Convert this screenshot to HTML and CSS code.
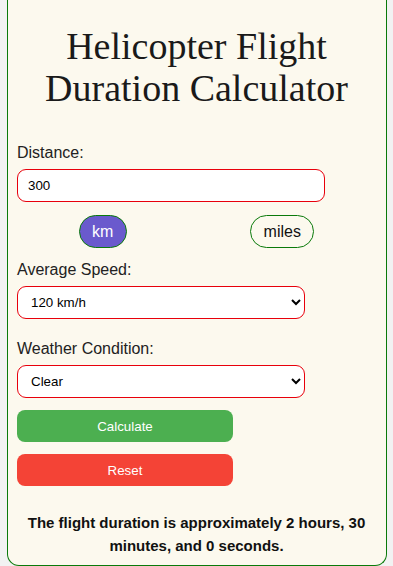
FILE: index.html
```html
<!DOCTYPE html>
<html>
<head>
<meta charset="utf-8">
<link rel="stylesheet" href="styles.css">
</head>
<body>
<div class="card">
  <h1 class="title">Helicopter Flight Duration Calculator</h1>
  <label class="label label-first">Distance:</label>
  <input class="text-input" type="text" value="300">
  <div class="units">
    <span class="unit unit-active">km</span>
    <span class="unit">miles</span>
  </div>
  <label class="label">Average Speed:</label>
  <select class="select select-speed"><option>120 km/h</option></select>
  <label class="label">Weather Condition:</label>
  <select class="select select-weather"><option>Clear</option></select>
  <button class="btn btn-calc">Calculate</button>
  <button class="btn btn-reset">Reset</button>
  <p class="result">The flight duration is approximately 2 hours, 30 minutes, and 0 seconds.</p>
</div>
</body>
</html>
```
FILE: styles.css
```css
html, body {
  margin: 0;
  padding: 0;
  background: #f2f2f2;
  height: 566px;
  overflow: hidden;
}
.card {
  margin: 0 6px 0 7px;
  padding: 25px 10px 8px 9px;
  background: #fcf9ee;
  border: 1px solid #0a7a0a;
  border-top: 0;
  border-radius: 0 0 12px 12px;
  font-family: "Liberation Sans", Arial, sans-serif;
  color: #222;
  display: flex;
  flex-direction: column;
  align-items: flex-start;
  height: 532px;
  box-sizing: content-box;
}
.title {
  align-self: stretch;
  margin: 0 0 35px;
  text-align: center;
  font-family: "Liberation Serif", "Times New Roman", serif;
  font-weight: normal;
  font-size: 38px;
  line-height: 42px;
  color: #1a1a1a;
  padding: 0 20px;
}
.label {
  font-size: 16px;
  line-height: 18px;
  margin: 0 0 7px;
}
.text-input {
  width: 308px;
  height: 33px;
  box-sizing: border-box;
  border: 1px solid #e8000b;
  border-radius: 9px;
  padding: 0 10px;
  font-family: "Liberation Sans", Arial, sans-serif;
  font-size: 13.33px;
  background: #fff;
  color: #000;
  margin: 0 0 13px;
}
.units {
  align-self: stretch;
  display: flex;
  justify-content: space-around;
  margin: 0 0 13px;
}
.unit {
  height: 33px;
  box-sizing: border-box;
  border: 1px solid #0a7a0a;
  border-radius: 17px;
  padding: 0 12.5px;
  font-size: 16px;
  line-height: 31px;
  color: #111;
}
.unit-active {
  background: #6a5acd;
  color: #fff;
}
.select {
  width: 288px;
  height: 33px;
  box-sizing: border-box;
  border: 1px solid #e8000b;
  border-radius: 9px;
  padding: 0 9px;
  font-family: "Liberation Sans", Arial, sans-serif;
  font-size: 13.33px;
  background: #fff;
  color: #000;
}
.select-speed { margin: 0 0 21px; }
.select-weather { margin: 0 0 12px; }
.btn {
  width: 216px;
  height: 32px;
  border: 0;
  border-radius: 8px;
  color: #fff;
  font-family: "Liberation Sans", Arial, sans-serif;
  font-size: 13.33px;
  margin: 0 0 12px;
}
.btn-calc { background: #4caf50; }
.btn-reset { background: #f44336; }
.result {
  align-self: stretch;
  text-align: center;
  font-weight: bold;
  font-size: 15px;
  line-height: 23px;
  margin: 13px 0 0;
  color: #111;
}
```
